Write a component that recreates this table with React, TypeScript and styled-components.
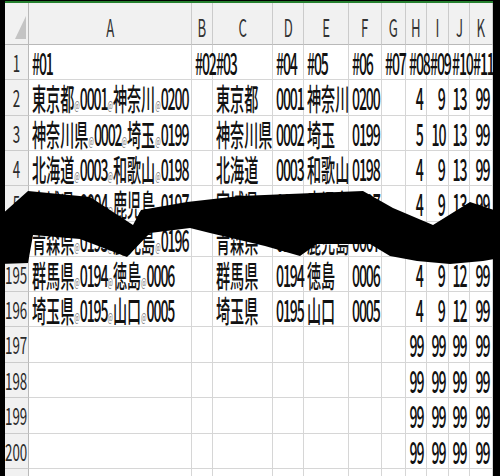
import React from "react";
import styled, { createGlobalStyle } from "styled-components";

const Global = createGlobalStyle`
  html, body { margin: 0; padding: 0; background: #000; }
  body { font-family: "Noto Sans CJK JP", "Noto Sans", sans-serif; }
`;

const COLS = "24px 163px 21px 60px 31px 45px 33px 24px 21px 22px 21px 23px";

type Align = "left" | "right" | "center";

const Page = styled.div`
  position: relative;
  width: 500px;
  height: 476px;
  box-sizing: border-box;
  padding: 1px 7px 0 5px;
  background: #000;
  overflow: hidden;
`;

const Sheet = styled.div`
  height: 100%;
  border-top: 2px solid #25802f;
  background: #fff;
  overflow: hidden;
  display: flex;
  flex-direction: column;
`;

const Row = styled.div<{ $h: number }>`
  display: grid;
  grid-template-columns: ${COLS};
  height: ${(p) => p.$h}px;
  flex: none;
`;

const Cell = styled.div<{ $align?: Align }>`
  box-sizing: border-box;
  border-right: 1px solid #d6d6d6;
  border-bottom: 1px solid #d6d6d6;
  display: flex;
  align-items: center;
  justify-content: ${(p) =>
    p.$align === "right" ? "flex-end" : p.$align === "center" ? "center" : "flex-start"};
  padding: 0 3px 1px;
  white-space: nowrap;
  min-width: 0;
  font-size: 30px;
  font-weight: 500;
  line-height: 1;
  color: #111;
`;

const ColHead = styled(Cell)`
  background: #f1f1f1;
  border-right-color: #cbcbcb;
  border-bottom-color: #b9b9b9;
  align-items: flex-end;
  padding-bottom: 5px;
  font-size: 24px;
  font-weight: 400;
  color: #333;
`;

const Corner = styled(ColHead)`
  justify-content: flex-end;
  padding: 0 2px 5px 0;
  border-right-color: #b9b9b9;
`;

const RowHead = styled(Cell)`
  background: #f1f1f1;
  border-right-color: #b9b9b9;
  border-bottom-color: #cbcbcb;
  justify-content: center;
  padding: 0;
  font-size: 23px;
  font-weight: 400;
  color: #2a2a2a;
`;

const Txt = styled.span<{ $origin?: Align; $sx?: number }>`
  display: inline-block;
  transform: scaleX(${(p) => p.$sx ?? 0.47});
  transform-origin: ${(p) => p.$origin ?? "left"} center;
`;

const Lat = styled.span`
  letter-spacing: -0.08em;
`;

const At = styled.span`
  font-size: 12px;
  color: #8a8a8a;
`;

const Scribble = styled.svg`
  position: absolute;
  left: 0;
  top: 0;
  pointer-events: none;
`;

const LETTERS = ["A", "B", "C", "D", "E", "F", "G", "H", "I", "J", "K"];

type Data = { n: string; v: string[] };

const R = (n: string, a: string, c: string, d: string, e: string, f: string, h: string, i: string, j: string, k: string): Data => ({
  n,
  v: [a, "", c, d, e, f, "", h, i, j, k],
});

const ROWS: Data[] = [
  { n: "1", v: ["#01", "#02", "#03", "#04", "#05", "#06", "#07", "#08", "#09", "#10", "#11"] },
  R("2", "東京都@0001@神奈川@0200", "東京都", "0001", "神奈川", "0200", "4", "9", "13", "99"),
  R("3", "神奈川県@0002@埼玉@0199", "神奈川県", "0002", "埼玉", "0199", "5", "10", "13", "99"),
  R("4", "北海道@0003@和歌山@0198", "北海道", "0003", "和歌山", "0198", "4", "9", "13", "99"),
  R("5", "宮城県@0004@鹿児島@0197", "宮城県", "0004", "鹿児島", "0197", "4", "9", "13", "99"),
  R("194", "青森県@0193@鹿児島@0196", "青森県", "0193", "鹿児島", "0007", "4", "9", "12", "99"),
  R("195", "群馬県@0194@徳島@0006", "群馬県", "0194", "徳島", "0006", "4", "9", "12", "99"),
  R("196", "埼玉県@0195@山口@0005", "埼玉県", "0195", "山口", "0005", "4", "9", "12", "99"),
  R("197", "", "", "", "", "", "99", "99", "99", "99"),
  R("198", "", "", "", "", "", "99", "99", "99", "99"),
  R("199", "", "", "", "", "", "99", "99", "99", "99"),
  R("200", "", "", "", "", "", "99", "99", "99", "99"),
  R("", "", "", "", "", "", "", "", "", ""),
];

const HEIGHTS = [35, 36, 35, 35, 36, 35, 35, 35, 36, 35, 36, 35, 35];

const renderText = (s: string) =>
  (s.match(/@|[#0-9]+|[^@#0-9]+/g) ?? []).map((tok, i) => {
    if (tok === "@") return <At key={i}>@</At>;
    if (/^[#0-9]+$/.test(tok)) return <Lat key={i}>{tok}</Lat>;
    return <React.Fragment key={i}>{tok}</React.Fragment>;
  });

const isNum = (s: string) => /^\d+$/.test(s) && s.length <= 2;

const SCRIBBLE =
  "0,216 28,191 90,197 133,225 141,210 187,202 240,196 363,191 393,208 433,225 470,202 500,212 " +
  "500,258 483,261 450,264 417,261 390,256 370,244 317,244 300,256 265,246 210,233 190,228 " +
  "150,233 127,257 80,239 33,235 28,263 0,264";

export default function App() {
  return (
    <Page>
      <Global />
      <Sheet>
        <Row $h={42}>
          <Corner>
            <svg width="11" height="23" viewBox="0 0 11 23">
              <polygon points="11,0 11,23 0,23" fill="#c4c4c4" />
            </svg>
          </Corner>
          {LETTERS.map((l) => (
            <ColHead key={l} $align="center">
              <Txt $origin="center" $sx={0.55}>{l}</Txt>
            </ColHead>
          ))}
        </Row>
        {ROWS.map((r, ri) => (
          <Row key={ri} $h={HEIGHTS[ri]}>
            <RowHead>
              <Txt $origin="center" $sx={0.58}>{r.n}</Txt>
            </RowHead>
            {r.v.map((v, ci) => {
              const right = isNum(v) && ri > 0;
              return (
                <Cell key={ci} $align={right ? "right" : "left"}>
                  {v && <Txt $origin={right ? "right" : "left"}>{renderText(v)}</Txt>}
                </Cell>
              );
            })}
          </Row>
        ))}
      </Sheet>
      <Scribble width="500" height="476" viewBox="0 0 500 476">
        <polygon points={SCRIBBLE} fill="#000" />
      </Scribble>
    </Page>
  );
}
